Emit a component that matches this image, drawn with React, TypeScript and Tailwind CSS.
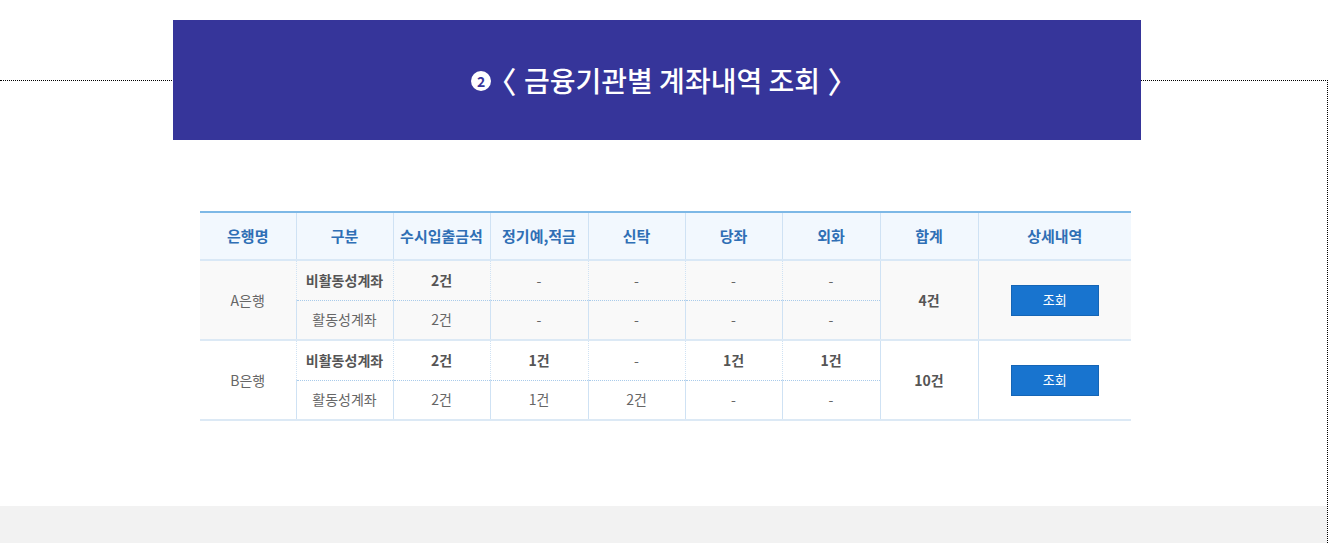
import React from 'react'

const HEAD = ['은행명', '구분', '수시입출금석', '정기예,적금', '신탁', '당좌', '외화', '합계', '상세내역']
const WIDTHS = ['w-[96px]', 'w-[97px]', 'w-[97px]', 'w-[98px]', 'w-[97px]', 'w-[97px]', 'w-[98px]', 'w-[98px]', 'w-[153px]']

const BANKS = [
  {
    name: 'A은행',
    total: '4건',
    bg: 'bg-[#f9f9f9]',
    rows: [
      { kind: '비활동성계좌', strong: true, vals: ['2건', '-', '-', '-', '-'] },
      { kind: '활동성계좌', strong: false, vals: ['2건', '-', '-', '-', '-'] },
    ],
  },
  {
    name: 'B은행',
    total: '10건',
    bg: 'bg-white',
    rows: [
      { kind: '비활동성계좌', strong: true, vals: ['2건', '1건', '-', '1건', '1건'] },
      { kind: '활동성계좌', strong: false, vals: ['2건', '1건', '2건', '-', '-'] },
    ],
  },
]

const font = { fontFamily: '"Noto Sans CJK KR", "Noto Sans", sans-serif' }

export default function App() {
  return (
    <div className="w-[1330px] h-[543px] overflow-hidden bg-white" style={font}>
      <div className="mt-[80px] w-[1328px] h-[463px] border-t border-r border-dotted border-black flex flex-col">
        {/* title bar */}
        <div className="-mt-[61px] ml-[173px] w-[968px] h-[120px] bg-[#36359a] flex items-center justify-center text-white">
          <span className="w-[20px] h-[20px] rounded-full bg-white text-[#36359a] text-[14px] font-bold leading-none flex items-center justify-center mr-[10px] mt-[1px]">
            2
          </span>
          <span className="text-[28px] font-medium leading-none flex items-center">
            <span className="w-[15px] flex justify-center font-medium text-[30px] mr-[8px]">
              <span className="-ml-[14px]">〈</span>
            </span>
            <span>금융기관별 계좌내역 조회</span>
            <span className="w-[15px] flex justify-center font-medium text-[30px] ml-[8px]">
              <span className="-mr-[14px]">〉</span>
            </span>
          </span>
        </div>

        {/* table */}
        <div className="mt-[71px] ml-[200px]">
          <table className="border-collapse table-fixed w-[931px] text-center">
            <thead>
              <tr className="h-[48px] bg-[#f2f8fe] border-t-2 border-[#7db8e6]">
                {HEAD.map((h, i) => (
                  <th
                    key={h}
                    className={`${WIDTHS[i]} p-0 text-[15px] font-bold text-[#2f6fb5] border-b-2 border-b-[#d9e8f6] ${i > 0 ? 'border-l border-l-[#cfe2f4]' : ''}`}
                  >
                    {h}
                  </th>
                ))}
              </tr>
            </thead>
            <tbody>
              {BANKS.map((b) =>
                b.rows.map((r, ri) => (
                  <tr
                    key={b.name + r.kind}
                    className={`h-[40px] ${b.bg} ${ri === 0 ? '' : 'border-b-2 border-b-[#dce9f5]'}`}
                  >
                    {ri === 0 && (
                      <td rowSpan={2} className="p-0 text-[14px] text-[#666]">
                        {b.name}
                      </td>
                    )}
                    <td
                      className={`p-0 text-[14px] border-l border-l-[#cfe2f4] ${ri === 0 ? 'border-b border-dotted border-b-[#a9cbea] font-bold text-[#555]' : 'text-[#666]'}`}
                    >
                      {r.kind}
                    </td>
                    {r.vals.map((v, vi) => (
                      <td
                        key={vi}
                        className={`p-0 text-[14px] border-l border-l-[#cfe2f4] ${ri === 0 ? 'border-b border-dotted border-b-[#a9cbea]' : ''} ${v !== '-' && ri === 0 ? 'font-bold text-[#555]' : 'text-[#666]'}`}
                      >
                        {v}
                      </td>
                    ))}
                    {ri === 0 && (
                      <>
                        <td rowSpan={2} className="p-0 text-[14px] font-bold text-[#555] border-l border-l-[#cfe2f4]">
                          {b.total}
                        </td>
                        <td rowSpan={2} className="p-0 border-l border-l-[#cfe2f4]">
                          <button className="w-[88px] h-[31px] bg-[#1874cf] text-white text-[13px] border border-[#1565b5] mx-auto block">
                            조회
                          </button>
                        </td>
                      </>
                    )}
                  </tr>
                ))
              )}
            </tbody>
          </table>
        </div>

        <div className="mt-auto h-[37px] bg-[#f2f2f2]" />
      </div>
    </div>
  )
}
